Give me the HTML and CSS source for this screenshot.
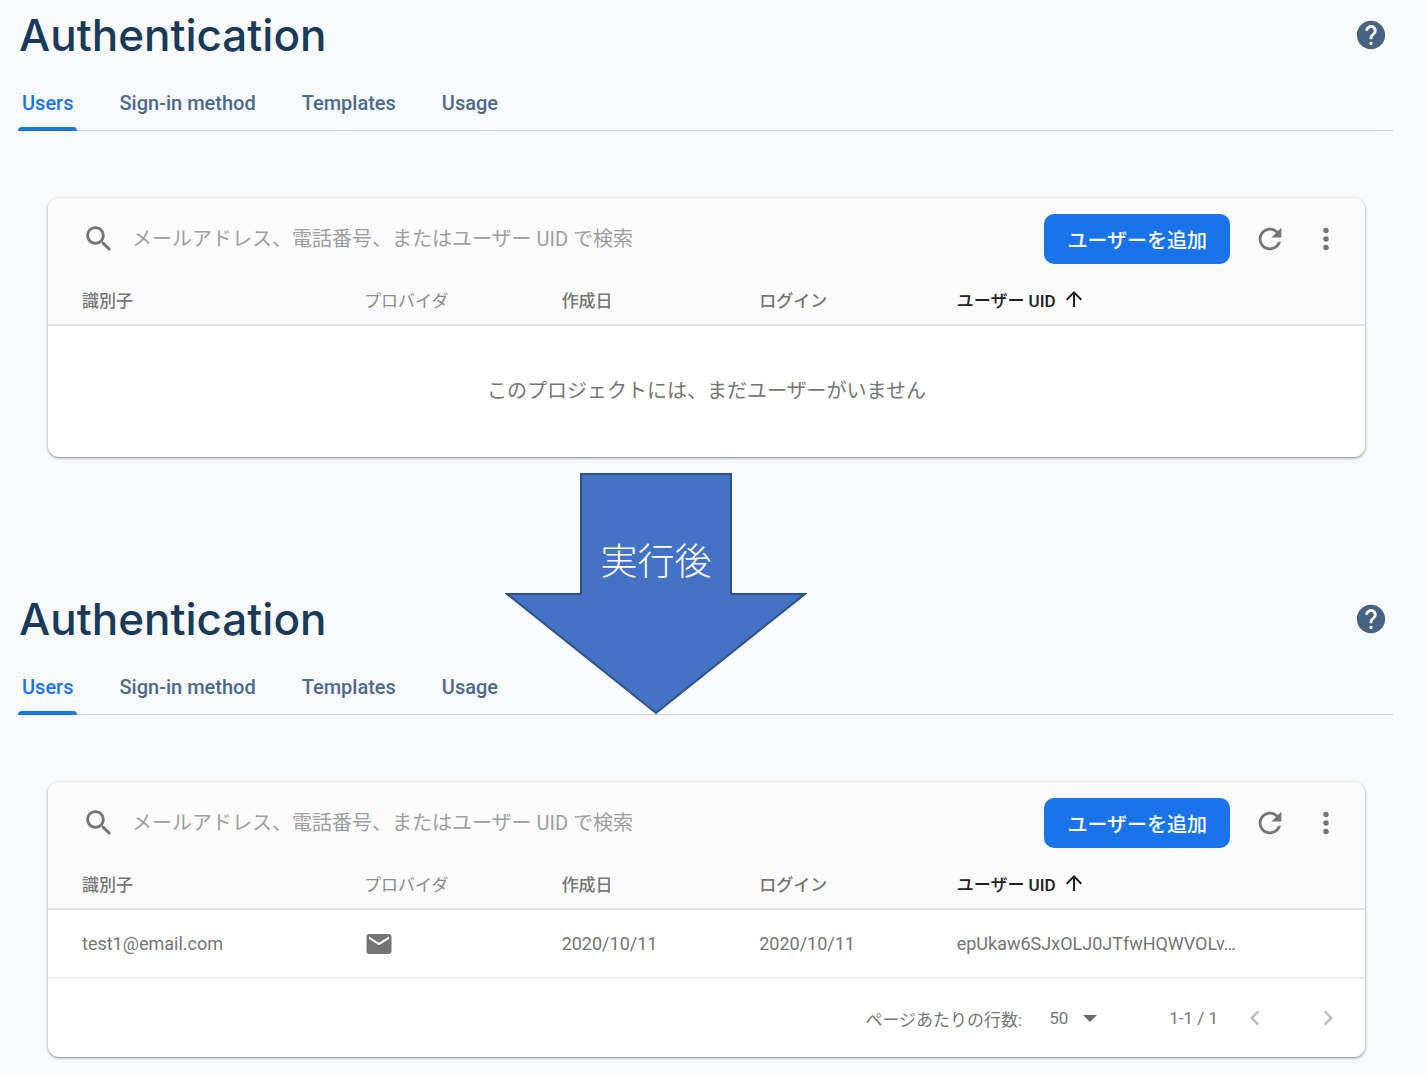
FILE: index.html
```html
<!DOCTYPE html>
<html lang="ja">
<head>
<meta charset="utf-8">
<title>Authentication</title>
<link rel="stylesheet" href="styles.css">
</head>
<body>

<!-- shared icons -->
<svg class="sprite" aria-hidden="true">
    <symbol id="help" viewBox="0 0 24 24"><path d="M12 2C6.48 2 2 6.48 2 12s4.480 10 10 10 10-4.480 10-10S17.520 2 12 2zm1 17h-2v-2h2v2zm2.070-7.750l-.9.920C13.450 12.900 13 13.500 13 15h-2v-.5c0-1.100.45-2.100 1.170-2.830l1.240-1.260c.37-.36.59-.86.59-1.410 0-1.100-.9-2-2-2s-2 .9-2 2H8c0-2.210 1.790-4 4-4s4 1.790 4 4c0 .88-.36 1.680-.93 2.250z"/></symbol>
    <symbol id="search" viewBox="0 0 24 24"><path d="M15.500 14h-.79l-.28-.27C15.410 12.590 16 11.110 16 9.500 16 5.910 13.090 3 9.500 3S3 5.910 3 9.500 5.910 16 9.500 16c1.610 0 3.090-.59 4.230-1.570l.27.28v.79l5 4.990L20.490 19l-4.990-5zm-6 0C7.010 14 5 11.990 5 9.500S7.010 5 9.500 5 14 7.010 14 9.500 11.990 14 9.500 14z"/></symbol>
    <symbol id="refresh" viewBox="0 0 24 24"><path d="M17.650 6.350C16.200 4.900 14.210 4 12 4c-4.420 0-7.990 3.580-7.990 8s3.570 8 7.990 8c3.730 0 6.840-2.550 7.730-6h-2.080c-.82 2.330-3.040 4-5.650 4-3.310 0-6-2.690-6-6s2.690-6 6-6c1.660 0 3.140.69 4.220 1.780L13 11h7V4l-2.350 2.350z"/></symbol>
    <symbol id="more" viewBox="0 0 24 24"><path d="M12 8c1.100 0 2-.9 2-2s-.9-2-2-2-2 .9-2 2 .9 2 2 2zm0 2c-1.100 0-2 .9-2 2s.9 2 2 2 2-.9 2-2-.9-2-2-2zm0 6c-1.100 0-2 .9-2 2s.9 2 2 2 2-.9 2-2-.9-2-2-2z"/></symbol>
    <symbol id="arrow-up" viewBox="0 0 24 24"><path d="M4 12l1.410 1.410L11 7.830V20h2V7.830l5.580 5.590L20 12l-8-8-8 8z"/></symbol>
    <symbol id="mail" viewBox="0 0 24 24"><path d="M20 4H4c-1.100 0-1.990.9-1.990 2L2 18c0 1.100.9 2 2 2h16c1.100 0 2-.9 2-2V6c0-1.100-.9-2-2-2zm0 4l-8 5-8-5V6l8 5 8-5v2z"/></symbol>
    <symbol id="prev" viewBox="0 0 24 24"><path d="M15.410 7.410L14 6l-6 6 6 6 1.410-1.410L10.830 12z"/></symbol>
    <symbol id="next" viewBox="0 0 24 24"><path d="M10 6L8.590 7.410 13.170 12l-4.580 4.590L10 18l6-6z"/></symbol>
</svg>

<section class="panel">
    <header class="panel-header">
        <h1>Authentication</h1>
        <button class="help-button" type="button" aria-label="Help"><svg class="icon"><use href="#help"/></svg></button>
    </header>
    <nav class="tabs">
        <a class="tab active" href="#users">Users</a>
        <a class="tab" href="#sign-in">Sign-in method</a>
        <a class="tab" href="#templates">Templates</a>
        <a class="tab" href="#usage">Usage</a>
    </nav>
    <div class="card">
        <div class="toolbar">
            <label class="search-label" for="search-before" aria-label="検索"><svg class="icon"><use href="#search"/></svg></label>
            <input class="search" id="search-before" type="text" placeholder="メールアドレス、電話番号、またはユーザー UID で検索">
            <button class="add-button" type="button">ユーザーを追加</button>
            <button class="icon-button" type="button" aria-label="Refresh"><svg class="icon"><use href="#refresh"/></svg></button>
            <button class="icon-button" type="button" aria-label="More"><svg class="icon"><use href="#more"/></svg></button>
        </div>
        <table class="users">
            <thead>
                <tr>
                    <th class="col-id">識別子</th>
                    <th class="col-provider">プロバイダ</th>
                    <th class="col-date">作成日</th>
                    <th class="col-date">ログイン</th>
                    <th class="sorted">ユーザー UID<svg class="icon sort-icon"><use href="#arrow-up"/></svg></th>
                </tr>
            </thead>
            <tbody>
                <tr>
                    <td class="empty" colspan="5">このプロジェクトには、まだユーザーがいません</td>
                </tr>
            </tbody>
        </table>
    </div>
</section>

<section class="panel">
    <!-- block arrow between the two states -->
    <svg class="step-arrow" viewBox="0 0 302 242">
        <polygon points="76,1 226,1 226,121 300,121 151,240 2,121 76,121"/>
        <text x="151" y="102">実行後</text>
    </svg>
    <header class="panel-header">
        <h1>Authentication</h1>
        <button class="help-button" type="button" aria-label="Help"><svg class="icon"><use href="#help"/></svg></button>
    </header>
    <nav class="tabs">
        <a class="tab active" href="#users">Users</a>
        <a class="tab" href="#sign-in">Sign-in method</a>
        <a class="tab" href="#templates">Templates</a>
        <a class="tab" href="#usage">Usage</a>
    </nav>
    <div class="card">
        <div class="toolbar">
            <label class="search-label" for="search-after" aria-label="検索"><svg class="icon"><use href="#search"/></svg></label>
            <input class="search" id="search-after" type="text" placeholder="メールアドレス、電話番号、またはユーザー UID で検索">
            <button class="add-button" type="button">ユーザーを追加</button>
            <button class="icon-button" type="button" aria-label="Refresh"><svg class="icon"><use href="#refresh"/></svg></button>
            <button class="icon-button" type="button" aria-label="More"><svg class="icon"><use href="#more"/></svg></button>
        </div>
        <table class="users">
            <thead>
                <tr>
                    <th class="col-id">識別子</th>
                    <th class="col-provider">プロバイダ</th>
                    <th class="col-date">作成日</th>
                    <th class="col-date">ログイン</th>
                    <th class="sorted">ユーザー UID<svg class="icon sort-icon"><use href="#arrow-up"/></svg></th>
                </tr>
            </thead>
            <tbody>
                <tr class="user-row">
                    <td>test1@email.com</td>
                    <td><svg class="icon mail-icon"><use href="#mail"/></svg></td>
                    <td>2020/10/11</td>
                    <td>2020/10/11</td>
                    <td>epUkaw6SJxOLJ0JTfwHQWVOLv…</td>
                </tr>
            </tbody>
        </table>
        <footer class="pager">
            <label for="page-size">ページあたりの行数:</label>
            <span class="select-wrap">
                <select id="page-size">
                    <option>50</option>
                    <option>100</option>
                </select>
            </span>
            <span class="range">1-1 / 1</span>
            <button class="page-button" type="button" aria-label="Previous page" disabled><svg class="icon"><use href="#prev"/></svg></button>
            <button class="page-button" type="button" aria-label="Next page" disabled><svg class="icon"><use href="#next"/></svg></button>
        </footer>
    </div>
</section>

</body>
</html>
```
FILE: styles.css
```css
* {
    box-sizing: border-box;
}

body {
    margin: 0;
    padding-bottom: 16px;
    background-color: #f7f9fb;
    font-family: Roboto, "Noto Sans CJK JP", sans-serif;
    color: #757575;
}

button, input, select {
    font-family: inherit;
    border: none;
    background: none;
    padding: 0;
    margin: 0;
}

.sprite {
    display: none;
}

.icon {
    display: block;
    width: 34px;
    height: 34px;
    fill: currentColor;
}

.panel {
    position: relative;
    padding: 0 34px 0 18px;
}

.panel + .panel {
    margin-top: 127px;
}

.panel-header {
    display: flex;
    align-items: center;
    justify-content: space-between;
    height: 70px;
    padding: 0 5px 0 1px;
}

h1 {
    margin: 0;
    font-family: Inter, sans-serif;
    font-size: 44px;
    font-weight: 500;
    line-height: 70px;
    color: #1a3a5a;
}

.help-button {
    color: #476282;
}

.tabs {
    display: flex;
    gap: 38px;
    box-shadow: inset 0 -1px #c3d2e3;
}

.tab {
    position: relative;
    padding: 21px 4px 16px;
    font-size: 20px;
    font-weight: 500;
    line-height: 24px;
    color: #4d698b;
    text-decoration: none;
}

.tab.active {
    color: #1a73e8;
}

.tab.active::after {
    content: "";
    position: absolute;
    left: 0;
    right: 0;
    bottom: 0;
    height: 4px;
    border-radius: 4px 4px 0 0;
    background-color: #1a73e8;
}

.card {
    margin: 67px 28px 0 30px;
    border-radius: 11px;
    background-color: #fff;
    box-shadow: 0 1px 3px rgba(0, 0, 0, 0.35), 0 1px 2px rgba(0, 0, 0, 0.15);
    overflow: hidden;
}

.toolbar {
    display: flex;
    align-items: center;
    padding: 16px 11px 10px 34px;
    background-color: #fafafa;
}

.search {
    flex: 1;
    min-width: 0;
    margin-left: 16px;
    font-size: 20px;
    line-height: 28px;
    color: #424242;
}

.search::placeholder {
    color: #9e9e9e;
    opacity: 1;
}

.add-button {
    height: 50px;
    margin-right: 12px;
    padding: 0 23px;
    border-radius: 10px;
    background-color: #1a73e8;
    color: #fff;
    font-size: 20px;
    font-weight: 500;
}

.icon-button {
    display: flex;
    justify-content: center;
    width: 56px;
    color: #757575;
}

.users {
    width: 100%;
    table-layout: fixed;
    border-collapse: separate;
    border-spacing: 0;
}

.users th {
    height: 52px;
    padding: 0;
    border-bottom: 2px solid #e2e2e2;
    background-color: #fafafa;
    text-align: left;
    font-size: 17px;
    font-weight: 500;
}

.users th:first-child,
.user-row td:first-child {
    padding-left: 34px;
}

.users .col-id {
    width: 24%;
}

.users .col-provider {
    width: 15%;
    font-weight: 400;
    color: #8c8c8c;
}

.users .col-date {
    width: 15%;
}

.users .sorted {
    color: #212121;
}

.sort-icon {
    display: inline-block;
    width: 24px;
    height: 24px;
    margin-left: 6px;
    vertical-align: -4px;
}

.users .empty {
    height: 131px;
    padding: 0 0 4px;
    text-align: center;
    font-size: 20px;
}

.user-row td {
    height: 69px;
    padding: 0;
    border-bottom: 2px solid #eee;
    font-size: 18px;
}

.mail-icon {
    width: 30px;
    height: 30px;
}

.pager {
    display: flex;
    align-items: center;
    justify-content: flex-end;
    height: 78px;
    padding-right: 9px;
    font-size: 17px;
}

.select-wrap {
    position: relative;
    margin: 0 72px 0 27px;
}

/* dropdown triangle */
.select-wrap::after {
    content: "";
    position: absolute;
    right: 0;
    top: 50%;
    margin-top: -3px;
    border: 7px solid transparent;
    border-top-color: #6b6b6b;
    border-bottom: none;
    pointer-events: none;
}

.select-wrap select {
    width: 48px;
    appearance: none;
    font-size: 17px;
    color: #757575;
}

.page-button {
    display: flex;
    justify-content: center;
    width: 56px;
    margin-left: 17px;
    color: #bdbdbd;
}

.range + .page-button {
    margin-left: 9px;
}

.page-button .icon {
    width: 30px;
    height: 30px;
}

.step-arrow {
    position: absolute;
    top: -111px;
    left: 46%;
    width: 302px;
    height: 242px;
    transform: translateX(-50%);
}

.step-arrow polygon {
    fill: #4472c4;
    stroke: #2f528f;
    stroke-width: 2;
}

.step-arrow text {
    fill: #fff;
    font-family: "Noto Sans CJK JP", sans-serif;
    font-size: 37px;
    font-weight: 300;
    text-anchor: middle;
}
```
